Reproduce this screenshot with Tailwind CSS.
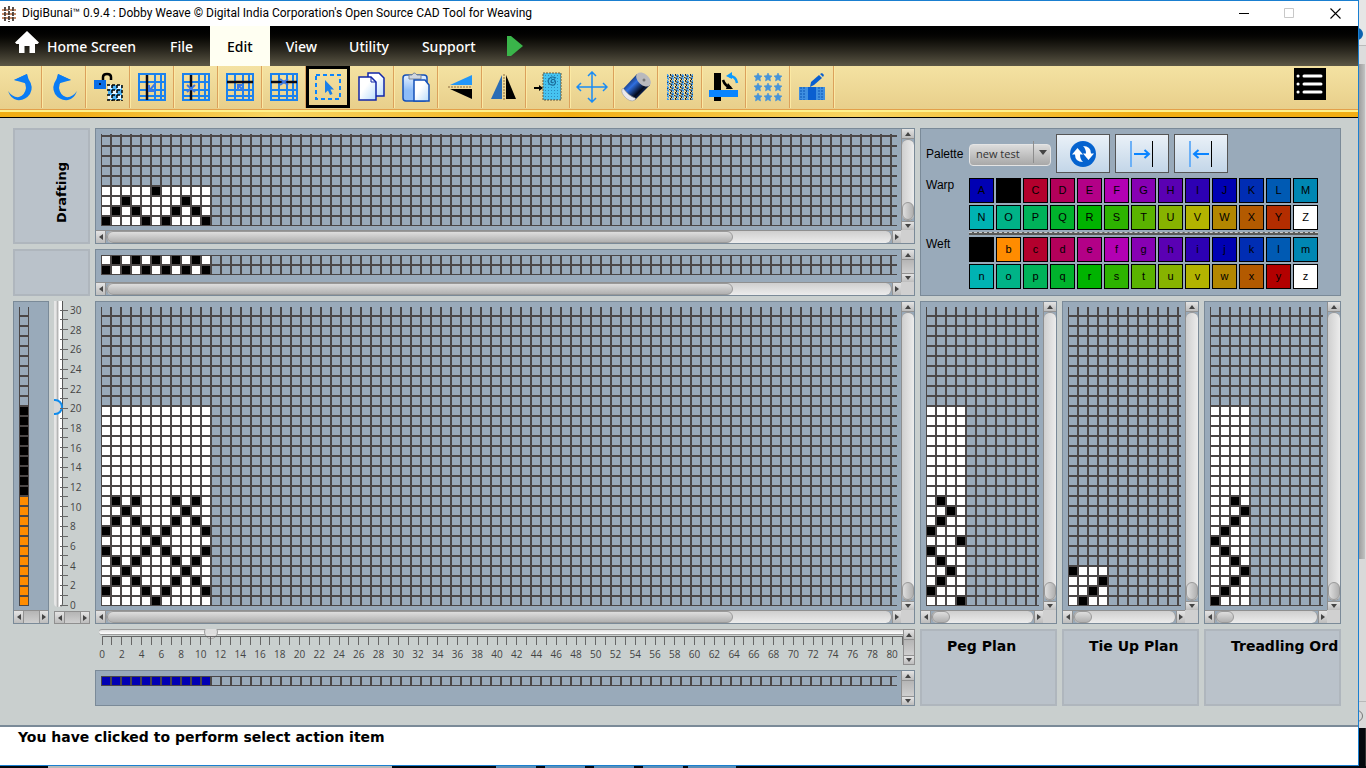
<!DOCTYPE html>
<html lang="en">
<head>
  <meta charset="UTF-8" />
  <meta name="viewport" content="width=device-width, initial-scale=1.0"/>
  <title>DigiBunai - Dobby Weave</title>
  <script src="https://cdn.jsdelivr.net/npm/@tailwindcss/browser@4"></script>
</head>
<body class="h-screen flex flex-col overflow-hidden bg-[#05080d] font-['Open_Sans',sans-serif]">

  <!-- Shared shapes -->
  <svg width="0" height="0" class="absolute" aria-hidden="true">
    <defs>
      <pattern id="weave" width="5" height="6" patternUnits="userSpaceOnUse">
        <path d="M0 0L3 2L1 4L4 6" fill="none" stroke="#0b1a2e" stroke-width="1"/>
        <path d="M2.500 0L5 2.500M3 3.500L5.500 6" fill="none" stroke="#1e90ff" stroke-width="1.4"/>
      </pattern>
      <pattern id="dots" width="3" height="3" patternUnits="userSpaceOnUse">
        <rect width="3" height="3" fill="#46c3f0"/><rect x="1" y="1" width="1" height="1" fill="#2b8cc0"/>
      </pattern>
      <linearGradient id="page" x1="0" y1="0" x2="1" y2="1"><stop offset=".4" stop-color="#fff"/><stop offset="1" stop-color="#b9dcfb"/></linearGradient>
      <linearGradient id="board" x1="0" y1="0" x2="0" y2="1"><stop offset="0" stop-color="#e8f3ff"/><stop offset=".6" stop-color="#8dbcf8"/></linearGradient>
      <linearGradient id="thread" x1=".1" y1=".2" x2=".8" y2=".9"><stop offset="0" stop-color="#08183c"/><stop offset=".35" stop-color="#2f6fe0"/><stop offset=".7" stop-color="#030a1c"/><stop offset="1" stop-color="#1c4aa0"/></linearGradient>
      <path id="star" d="M4 0L5.2 2.6L8 3L6 5L6.5 8L4 6.6L1.5 8L2 5L0 3L2.8 2.6Z"/>
    </defs>
  </svg>

  <div class="flex-1 min-h-0 flex">
    <div class="flex-1 min-w-0 flex flex-col border-t border-r border-b border-[#1a7fd0] bg-[#c9cfce]">

      <!-- Title bar -->
      <div class="h-[25px] shrink-0 flex items-center bg-white text-black">
        <svg class="w-4 h-4 ml-px mr-[5px]" viewBox="0 0 16 16" fill="none" stroke-width="1.7">
          <path d="M1 4H15M1 8H15M1 12H15" stroke="#b5683c" stroke-dasharray="3 1"/>
          <path d="M4 1V15M8 0V16M12 1V15" stroke="#3c3029" stroke-dasharray="4 1"/>
        </svg>
        <h1 class="text-[12px] leading-6 pb-px whitespace-nowrap font-['Roboto',sans-serif]">DigiBunai™ 0.9.4 : Dobby Weave © Digital India Corporation's Open Source CAD Tool for Weaving</h1>
        <div class="ml-auto flex">
          <button aria-label="Minimize" class="w-[45px] h-6 grid place-items-center"><svg class="w-[11px] h-[11px]" viewBox="0 0 11 11"><path d="M0 5.5H10" stroke="#000"/></svg></button>
          <button aria-label="Maximize" class="w-[45px] h-6 grid place-items-center" disabled><svg class="w-[11px] h-[11px]" viewBox="0 0 11 11"><path d="M.5 .5H9.5V9.5H.5Z" stroke="#c8c8c8" fill="none"/></svg></button>
          <button aria-label="Close" class="w-[46px] h-6 grid place-items-center"><svg class="w-[11px] h-[11px]" viewBox="0 0 11 11"><path d="M.5 .5L10.5 10.5M10.5 .5L.5 10.5" stroke="#000" stroke-width="1.1"/></svg></button>
        </div>
      </div>

      <!-- Menu bar -->
      <nav class="h-10 shrink-0 flex bg-linear-to-b from-black to-[#5c5746] text-white text-[14px] font-medium font-['Noto_Sans',sans-serif]">
        <button class="flex items-center pl-[15px] pr-[17px] whitespace-nowrap">
          <svg class="w-6 h-6 mr-2 -mt-2" viewBox="0 0 24 24" fill="#fff"><path d="M12 1L24 12.5L22.5 14H20V23H14.5V16H9.500V23H4V14H1.500L0 12.500Z"/></svg>Home Screen
        </button>
        <button class="px-[17px]">File</button>
        <button class="px-[17px] bg-[#fffff2] text-black">Edit</button>
        <button class="px-4">View</button>
        <button class="px-4">Utility</button>
        <button class="px-[17px]">Support</button>
        <button aria-label="Run" class="px-[14px]"><svg class="w-4 h-5" viewBox="0 0 16 20"><path d="M0 0H4L16 10L4 20H0Z" fill="#3ab54a"/></svg></button>
      </nav>

      <!-- Toolbar -->
      <div class="h-11 shrink-0 flex bg-linear-to-b from-[#f4e2a2] to-[#e8cf8b] border-b border-[#e3a04a]">
        <div id="tools" class="flex h-[42px]"></div>
        <button aria-label="Menu" class="ml-auto mr-8 mt-[2px] w-8 h-8 bg-black">
          <svg viewBox="0 0 32 32" stroke="#fff" stroke-width="3" stroke-linecap="round"><path d="M4 8H4.100M10 8H27M4 16H4.100M10 16H27M4 24H4.100M10 24H27"/></svg>
        </button>
      </div>
      <div class="h-2 shrink-0 border-t-2 border-b border-t-[#fdf08c] border-b-black bg-[linear-gradient(90deg,#f2ae13_0%,#f2b01a_6%,#f8d562_20%,#f2ae13_42%,#f8d562_63%,#f2ae13_84%,#f2ae13_100%)]"></div>

      <!-- Workspace -->
      <main class="flex-1 min-h-0 grid grid-cols-[77px_minmax(0,1fr)_421px] grid-rows-[116px_47px_minmax(0,1fr)_36px_36px] gap-[5px] pt-[10px] pl-[13px] pr-[17px] pb-[19px]">

        <div class="border-2 border-[#afb6bd] bg-[#bac2ca] grid place-items-center pl-5 pt-3">
          <h2 class="[writing-mode:vertical-rl] rotate-180 text-[13px] leading-4 font-bold font-['DejaVu_Sans',sans-serif]">Drafting</h2>
        </div>

        <section class="border border-[#7a8a98] bg-[#99aaba] flex" aria-label="Drafting grid">
          <div class="flex-1 min-w-0 flex flex-col">
            <svg data-grid="drafting" class="flex-1 min-h-0 mt-[5px] ml-[5px] mr-1 mb-1"></svg>
            <div data-hbar="626px"></div>
          </div>
          <div class="w-[13px] flex flex-col"><div data-vbar="18px" class="flex-1"></div><div class="h-[13px] bg-[#d0d0d0]"></div></div>
        </section>

        <section class="row-span-2 border border-[#7a8a98] bg-[#99aaba] pl-[5px] pt-[5px] font-['Liberation_Sans',sans-serif]">
          <div class="flex items-center gap-[5px]">
            <label for="palette" class="w-[38px] text-[12px]">Palette</label>
            <div class="relative">
              <select id="palette" class="appearance-none w-[82px] h-[22px] pl-[6px] text-[11px] text-[#333] rounded border border-[#e4e4e4] bg-linear-to-b from-[#dcdcdc] to-[#a8a8a8] font-['Open_Sans',sans-serif]"><option>new test</option></select>
              <span class="absolute right-0 top-0 h-[22px] w-[18px] border-l border-[#8d8d8d] grid place-items-center pointer-events-none"><svg class="w-2 h-[5px]" viewBox="0 0 8 5"><path d="M0 0H8L4 5Z" fill="#444"/></svg></span>
            </div>
            <button aria-label="Swap" class="w-[54px] h-[39px] grid place-items-center border border-[#555] bg-linear-to-b from-[#eaf1f8] to-[#c3d6e8]">
              <svg class="w-7 h-7" viewBox="0 0 28 28"><circle cx="14" cy="14" r="13" fill="#0563cf"/><path d="M8.500 8L14 14.500H11Q11 19 14 22Q6 22 6 14.500H3ZM19.500 20L14 13.500H17Q17 9 14 6Q22 6 22 13.500H25Z" fill="#fff"/></svg>
            </button>
            <button aria-label="Warp to weft" class="w-[54px] h-[39px] grid place-items-center border border-[#555] bg-linear-to-b from-[#eaf1f8] to-[#c3d6e8]">
              <svg class="w-7 h-7" viewBox="0 0 28 28" fill="none"><path d="M3 1V27" stroke="#6cb0f6" stroke-width="2"/><path d="M24.500 1V27" stroke="#000"/><path d="M6 14H20M16.500 10L21 14L16.500 18" stroke="#0a84ff" stroke-width="2"/></svg>
            </button>
            <button aria-label="Weft to warp" class="w-[54px] h-[39px] grid place-items-center border border-[#555] bg-linear-to-b from-[#eaf1f8] to-[#c3d6e8]">
              <svg class="w-7 h-7" viewBox="0 0 28 28" fill="none"><path d="M3 1V27" stroke="#6cb0f6" stroke-width="2"/><path d="M24.500 1V27" stroke="#000"/><path d="M22 14H8M11.500 10L7 14L11.500 18" stroke="#0a84ff" stroke-width="2"/></svg>
            </button>
          </div>
          <div class="flex gap-[5px] mt-[5px] text-[12px]">
            <span class="w-[38px] leading-[14px]">Warp</span>
            <div data-swatches="warp" class="grid grid-cols-13 gap-[2px]"></div>
          </div>
          <div class="ml-[43px] w-[349px] h-[3px] mt-[2px] mb-[2px] bg-[#5a5a58] border-t border-dashed border-[#c9c9c9]"></div>
          <div class="flex gap-[5px] text-[12px]">
            <span class="w-[38px] leading-[14px]">Weft</span>
            <div data-swatches="weft" class="grid grid-cols-13 gap-[2px]"></div>
          </div>
        </section>

        <div class="border-2 border-[#afb6bd] bg-[#bac2ca]"></div>

        <section class="border border-[#7a8a98] bg-[#99aaba] flex" aria-label="Denting">
          <div class="flex-1 min-w-0 flex flex-col">
            <svg data-grid="denting" class="h-5 mt-[5px] ml-[5px] mr-1 mb-auto"></svg>
            <div data-hbar="626px"></div>
          </div>
          <div class="w-[13px] flex flex-col"><div data-vbar="" class="flex-1"></div><div class="h-[13px] bg-[#d0d0d0]"></div></div>
        </section>

        <div class="grid grid-cols-2 gap-[5px]">
          <section class="border border-[#7a8a98] bg-[#99aaba] flex flex-col" aria-label="Weft colours">
            <svg data-grid="weftColors" class="flex-1 min-h-0 w-[10px] mt-[5px] ml-[5px] mb-1"></svg>
            <div data-hbar=""></div>
          </section>
          <div class="flex flex-col min-h-0">
            <div class="flex-1 min-h-0 flex overflow-hidden">
              <div class="grid w-[6px] shrink-0">
                <div class="[grid-area:1/1] mb-[4px] border-r border-[#555] rounded-b bg-linear-to-r from-[#e6e6e6] from-25% via-[#a5a5a5] via-50% to-white to-60%"></div>
                <input type="range" aria-label="Weft count" min="0" max="30" value="20" class="[grid-area:1/1] [writing-mode:vertical-lr] [direction:rtl] appearance-none bg-transparent w-4 h-full -ml-[7px] [&::-webkit-slider-thumb]:appearance-none [&::-webkit-slider-thumb]:w-4 [&::-webkit-slider-thumb]:h-4 [&::-webkit-slider-thumb]:rounded-full [&::-webkit-slider-thumb]:border-2 [&::-webkit-slider-thumb]:border-[#0e8cee] [&::-webkit-slider-thumb]:bg-[#d6d6d6]"/>
              </div>
              <svg data-axis="y" class="flex-1 min-w-0 mt-[9px] mb-[6px] overflow-visible text-[10px]"></svg>
            </div>
            <div data-hbar="" class="border border-[#8f8f8f]"></div>
          </div>
        </div>

        <section class="border border-[#7a8a98] bg-[#99aaba] flex" aria-label="Weave design">
          <div class="flex-1 min-w-0 flex flex-col">
            <svg data-grid="design" class="flex-1 min-h-0 mt-[5px] ml-[5px] mr-1 mb-1"></svg>
            <div data-hbar="626px"></div>
          </div>
          <div class="w-[13px] flex flex-col"><div data-vbar="18px" class="flex-1"></div><div class="h-[13px] bg-[#d0d0d0]"></div></div>
        </section>

        <div class="grid grid-cols-3 gap-[5px]">
          <section class="border border-[#7a8a98] bg-[#99aaba] flex" aria-label="Peg plan grid">
            <div class="flex-1 min-w-0 flex flex-col">
              <svg data-grid="peg" class="flex-1 min-h-0 mt-[5px] ml-[5px] mr-1 mb-1"></svg>
              <div data-hbar="18px"></div>
            </div>
            <div class="w-[13px] flex flex-col"><div data-vbar="18px" class="flex-1"></div><div class="h-[13px] bg-[#d0d0d0]"></div></div>
          </section>
          <section class="border border-[#7a8a98] bg-[#99aaba] flex" aria-label="Tie up grid">
            <div class="flex-1 min-w-0 flex flex-col">
              <svg data-grid="tieup" class="flex-1 min-h-0 mt-[5px] ml-[5px] mr-1 mb-1"></svg>
              <div data-hbar="18px"></div>
            </div>
            <div class="w-[13px] flex flex-col"><div data-vbar="18px" class="flex-1"></div><div class="h-[13px] bg-[#d0d0d0]"></div></div>
          </section>
          <section class="border border-[#7a8a98] bg-[#99aaba] flex" aria-label="Treadling grid">
            <div class="flex-1 min-w-0 flex flex-col">
              <svg data-grid="treadling" class="flex-1 min-h-0 mt-[5px] ml-[5px] mr-1 mb-1"></svg>
              <div data-hbar="18px"></div>
            </div>
            <div class="w-[13px] flex flex-col"><div data-vbar="18px" class="flex-1"></div><div class="h-[13px] bg-[#d0d0d0]"></div></div>
          </section>
        </div>

        <div class="col-start-2 flex">
          <div class="flex-1 min-w-0 overflow-hidden">
            <div class="grid h-[7px] items-start">
              <div class="[grid-area:1/1] ml-1 h-[6px] rounded-l-full border-y border-[#9a9a9a] bg-linear-to-b from-[#e0e0e0] to-white"></div>
              <input type="range" aria-label="Warp count" min="0" max="81" value="11" class="[grid-area:1/1] appearance-none bg-transparent h-[14px] w-[calc(100%+6px)] -mt-1 [&::-webkit-slider-thumb]:appearance-none [&::-webkit-slider-thumb]:w-[14px] [&::-webkit-slider-thumb]:h-[14px] [&::-webkit-slider-thumb]:rounded-full [&::-webkit-slider-thumb]:border [&::-webkit-slider-thumb]:border-[#9c9c9c] [&::-webkit-slider-thumb]:bg-[#dedede]"/>
            </div>
            <div class="pl-[7px] pr-px"><svg data-axis="x" class="w-full h-7 overflow-visible text-[10px]"></svg></div>
          </div>
          <div data-vbar="" class="w-3 border border-[#8f8f8f]"></div>
        </div>

        <div class="row-span-2 grid grid-cols-3 gap-[5px] text-[14px] leading-5 font-bold font-['DejaVu_Sans',sans-serif] whitespace-nowrap">
          <div class="border-2 border-[#afb6bd] bg-[#bac2ca] pl-[25px] pt-[5px] overflow-hidden"><h2>Peg Plan</h2></div>
          <div class="border-2 border-[#afb6bd] bg-[#bac2ca] pl-[25px] pt-[5px] overflow-hidden"><h2>Tie Up Plan</h2></div>
          <div class="border-2 border-[#afb6bd] bg-[#bac2ca] pl-[25px] pt-[5px] overflow-hidden"><h2>Treadling Ord</h2></div>
        </div>

        <section class="col-start-2 border border-[#7a8a98] bg-[#99aaba] flex" aria-label="Warp colours">
          <svg data-grid="warpColors" class="flex-1 min-w-0 h-[10px] mt-[5px] ml-[5px] mr-1"></svg>
          <div data-vbar="" class="w-[13px]"></div>
        </section>
      </main>

      <footer class="h-10 shrink-0 border-t-2 border-[#7a8a98] bg-white pl-[18px] text-[14px] leading-5 font-bold font-['DejaVu_Sans',sans-serif]">You have clicked to perform select action item</footer>
    </div>

    <!-- Window behind -->
    <div class="w-[7px] shrink-0 flex flex-col overflow-hidden bg-[#d9d9d9]">
      <div class="h-[46px] pt-7 bg-[#e6e6e6] border-b border-[#bbb]"><div class="w-3 h-3 -ml-2 rounded-full bg-[#0b63b0]"></div></div>
      <div class="h-[18px] bg-[#dcdcdc]"></div>
      <div class="h-[495px] bg-linear-to-r from-[#9e9e9e] to-[#c2c2c2] border-r border-[#ddd]"></div>
      <div class="h-[143px] border-b border-[#b8b8b8]"></div>
      <div class="h-[26px] pt-2"><div class="w-3 h-3 -ml-2 rounded-full border border-[#777]"></div></div>
      <div class="flex-1 bg-[#05080d] border-r border-[#333]"></div>
    </div>
  </div>

  <!-- Taskbar edge -->
  <div class="h-[2px] shrink-0 flex">
    <div class="w-12"></div><div class="w-[344px] bg-[#b9b9b9]"></div>
    <div class="ml-[104px] flex gap-[9px]">
      <div class="w-10 bg-[#5c8fb8]"></div><div class="w-10 bg-[#5c8fb8]"></div><div class="w-10 bg-[#5c8fb8]"></div><div class="w-10 bg-[#5c8fb8]"></div>
    </div>
    <div class="ml-[5px] w-12 bg-[#5c8fb8]"></div>
  </div>

  <script>
    const fills = { '.': '#fff', '#': '#000', o: '#ff8c00', b: '#0000b3' };
    const blank = (n, width) => Array(n).fill('.'.repeat(width));

    // rows run from the bottom up
    const grids = {
      drafting: ['#...#.#...#', '.#.#...#.#.', '..#.....#..', '.....#.....'],
      denting: ['#.#.#.#.#.#', '.#.#.#.#.#.'],
      design: ['.....#.....', '#...#.#...#', '.#.#...#.#.', '..#.....#..', '.#.#...#.#.', '#...#.#...#',
        '.....#.....', '#...#.#...#', '.#.#...#.#.', '..#.....#..', '.#.#...#.#.', ...blank(9, 11)],
      weftColors: [...'ooooooooooo#########'],
      warpColors: ['bbbbbbbbbbb'],
      peg: ['...#', '#...', '.#..', '..#.', '.#..', '#...', '...#', '#...', '.#..', '..#.', '.#..', ...blank(9, 4)],
      tieup: ['.#..', '..#.', '...#', '#...'],
      treadling: ['#...', '.#..', '..#.', '...#', '..#.', '.#..', '#...', '.#..', '..#.', '...#', '..#.', ...blank(9, 4)]
    };

    let mesh = '';
    for (let i = 0; i <= 300; i++) mesh += `M${i * 10} -1200V0`;
    for (let i = 0; i <= 120; i++) mesh += `M0 ${-i * 10}H3000`;

    document.querySelectorAll('[data-grid]').forEach(svg => {
      const cells = grids[svg.dataset.grid].map((row, r) => [...row].map((c, i) =>
        `<rect x="${i * 10}" y="${-(r + 1) * 10}" width="10" height="10" fill="${fills[c]}"/>`).join('')).join('');
      svg.innerHTML = `<svg y="100%" overflow="visible" shape-rendering="crispEdges">${cells}<path d="${mesh}" stroke="#4b4747" stroke-width="2"/></svg>`;
    });

    document.querySelectorAll('[data-axis]').forEach(svg => {
      const isX = svg.dataset.axis === 'x';
      const max = isX ? 81 : 30;
      let out = isX
        ? '<line x1="0" x2="110%" y1="0.5" y2="0.5" stroke="#666"/>'
        : '';
      for (let i = 0; i <= max; i++) {
        const p = (isX ? i : max - i) / max * 100 + '%';
        out += isX ? `<line x1="${p}" x2="${p}" y1="0" y2="9" stroke="#666" shape-rendering="crispEdges"/>`
                   : `<line x1="0" x2="8" y1="${p}" y2="${p}" stroke="#666" shape-rendering="crispEdges"/>`;
        if (i % 2 === 0) {
          out += isX ? `<text x="${p}" y="22" text-anchor="middle" fill="#444">${i}</text>`
                     : `<text x="10" y="${p}" dy="4" fill="#444">${i}</text>`;
        }
      }
      svg.innerHTML = out;
    });

    const arrow = (label, d, cls) =>
      `<button aria-label="${label}" class="${cls} shrink-0 grid place-items-center bg-linear-to-b from-[#e4e4e4] to-[#bdbdbd] border-[#929292]"><svg class="w-[6px] h-[6px]" viewBox="0 0 6 6"><path d="${d}" fill="#444"/></svg></button>`;

    document.querySelectorAll('[data-hbar]').forEach(el => {
      const size = el.dataset.hbar;
      el.classList.add('flex', 'shrink-0', 'h-[13px]', 'border-t', 'border-[#8f8f8f]');
      el.innerHTML = arrow('Scroll left', 'M5 0V6L1 3Z', 'w-[10px] border-r') +
        (size ? `<div class="flex-1 rounded-full bg-linear-to-b from-[#cfcfcf] to-[#ececec] border-x border-[#999]"><div class="h-full rounded-full border border-[#999] bg-linear-to-b from-[#dedede] to-[#b0b0b0]" style="width:${size}"></div></div>`
              : '<div class="flex-1 bg-linear-to-b from-[#b5b5b5] to-[#cfcfcf]"></div>') +
        arrow('Scroll right', 'M1 0V6L5 3Z', 'w-[9px] border-l');
    });

    document.querySelectorAll('[data-vbar]').forEach(el => {
      const size = el.dataset.vbar;
      el.classList.add('flex', 'flex-col', 'border-l', 'border-[#8f8f8f]');
      el.innerHTML = arrow('Scroll up', 'M0 5H6L3 1Z', 'h-[10px] border-b') +
        (size ? `<div class="flex-1 flex items-end rounded-full bg-linear-to-r from-[#cfcfcf] to-[#ececec] border-y border-[#999]"><div class="w-full rounded-full border border-[#999] bg-linear-to-r from-[#dedede] to-[#b0b0b0]" style="height:${size}"></div></div>`
              : '<div class="flex-1 bg-linear-to-b from-[#b5b5b5] to-[#cfcfcf]"></div>') +
        arrow('Scroll down', 'M0 1H6L3 5Z', 'h-[9px] border-t');
    });

    const wheel = ['#b3002d', '#b3005a', '#b30087', '#b300b3', '#8700b3', '#5a00b3', '#2d00b3', '#0000b3', '#002db3', '#005ab3', '#0087b3',
      '#00b3b3', '#00b387', '#00b35a', '#00b32d', '#00b300', '#2db300', '#5ab300', '#87b300', '#b3b300', '#b38700', '#b35a00'];
    const palettes = {
      warp: { letters: 'ABCDEFGHIJKLMNOPQRSTUVWXYZ', colors: ['#0000b3', '#000000', ...wheel, '#b32d00', '#ffffff'] },
      weft: { letters: 'abcdefghijklmnopqrstuvwxyz', colors: ['#000000', '#ff8c00', ...wheel, '#b30000', '#ffffff'] }
    };
    document.querySelectorAll('[data-swatches]').forEach(el => {
      const { letters, colors } = palettes[el.dataset.swatches];
      el.innerHTML = colors.map((c, i) =>
        `<button class="w-[25px] h-[25px] border border-black text-[11px] leading-none text-black" style="background:${c}">${letters[i]}</button>`).join('');
    });

    const lattice = (mark, arrowPath) =>
      `<path d="M3 3H29V29H3ZM3 11H29M3 19H29M3 25H29M11 3V29M19 3V29M25 3V29" stroke="#1b82ee" stroke-width="2"/><path d="${mark}" stroke="#0a0a14" stroke-width="2.500"/><path d="${arrowPath}" stroke="#3b78e4" stroke-width="2"/>`;
    const stars = [0, 10, 20].map(y => [0, 10, 20].map(x => `<use href="#star" x="${x + 2}" y="${y + 2}"/>`).join('')).join('');

    const tools = [
      ['Undo', '<path d="M9 9L22 3L23.500 8Q29 16 25 23Q20 30 12 29Q6 28 3 20Q8 27 14 26Q20 24 21 17Q21 13 19 10.500Z" fill="#0a7cf5"/><path d="M9 9L22 3L23 13Z" fill="#0a7cf5"/>'],
      ['Redo', '<path d="M23 9L10 3L8.500 8Q3 16 7 23Q12 30 20 29Q26 28 29 20Q24 27 18 26Q12 24 11 17Q11 13 13 10.500Z" fill="#0a7cf5"/><path d="M23 9L10 3L9 13Z" fill="#0a7cf5"/>'],
      ['Unlock', '<path d="M11 9V6Q11 3 15 3Q19 3 19 6V9" stroke="#000" stroke-width="2.500"/><path d="M2 9H14V18H2Z" fill="#0a6ee8"/><path d="M16 14H30V29H16Z" fill="#4ab0f5"/><path d="M16 14H20V18H16ZM25 14H29V18H25ZM20 19H25V23H20ZM16 24H20V28H16ZM25 24H29V28H25Z" fill="#e8f6ff"/><path d="M15 14H30M15 19H30M15 24H30M15 29H30M20 14V30M25 14V30M30 14V30" stroke="#000" stroke-width="1.500" stroke-dasharray="3 2"/><path d="M7 13H9" stroke="#013" stroke-width="2"/>'],
      ['Insert warp', lattice('M11 4V29', 'M19 13L13 20M13 14V20H19')],
      ['Delete warp', lattice('M11 4V29', 'M7 14L15 21M15 14L7 21')],
      ['Insert weft', lattice('M3 11H29', 'M20 20L14 14M14 19V14H19')],
      ['Delete weft', lattice('M3 11H29', 'M12 8L20 14M20 8L12 14')],
      ['Select', '<path d="M4 4H28V28H4Z" stroke="#0a84ff" stroke-width="2" stroke-dasharray="4 3"/><path d="M13 9V22L16 19.500L18 24L20.500 23L18.500 18.500H22Z" fill="#1a7fe8"/>'],
      ['Copy', '<path d="M12 2H23L28 7V25H12Z" fill="url(#page)" stroke="#1226a8" stroke-width="1.500"/><path d="M3 6H15L20 11V29H3Z" fill="url(#page)" stroke="#1226a8" stroke-width="1.500"/><path d="M15 6V11H20" stroke="#1226a8"/>'],
      ['Paste', '<rect x="3" y="4" width="24" height="26" rx="3" fill="url(#board)" stroke="#1450b8" stroke-width="1.500"/><path d="M9 8V4H12Q14 0 17 4H21V8Z" fill="#cfd6e0" stroke="#7d8794"/><path d="M14 9H25L29 14V30H14Z" fill="url(#page)" stroke="#1450b8" stroke-width="1.500"/>'],
      ['Mirror vertical', '<path d="M28 4V14H6Z" fill="#2196f8"/><path d="M28 28V18H6Z" fill="#000"/><path d="M4 16H28" stroke="#8a6a40" stroke-dasharray="2 1"/>'],
      ['Mirror horizontal', '<path d="M14 4V28H3Z" fill="#2a6db5"/><path d="M18 4V28H28Z" fill="#000"/><path d="M16 3V29" stroke="#8a6a40" stroke-dasharray="2 1"/>'],
      ['Clear', '<rect x="11" y="2" width="18" height="27" fill="url(#dots)" stroke="#6b5a3a" stroke-dasharray="2 1"/><path d="M24 7Q18 4 16 10Q17 15 22 14Q25 11 22 8.500Q19 8 19 11Q20 12.500 21.500 11" stroke="#1a6a98" stroke-width="1.200"/><path d="M2 17H8" stroke="#000" stroke-width="2"/><path d="M7 14L11 17L7 20Z" fill="#000"/>'],
      ['Move', '<path d="M16 1V31M1 16H31M12 5L16 1L20 5M12 27L16 31L20 27M5 12L1 16L5 20M27 12L31 16L27 20" stroke="#1a8cf5" stroke-width="1.500"/>'],
      ['Yarn', '<path d="M3 18L17 3L30 14L15 29Z" fill="url(#thread)"/><ellipse cx="23.500" cy="8.500" rx="8.500" ry="5.500" transform="rotate(42 23.500 8.500)" fill="#b9b9bd"/><circle cx="24" cy="9" r="1.500" fill="#777"/><path d="M3 17Q0 20 4 25Q10 32 15 29Q16 27 15 27Q8 25 3 17Z" fill="#e8e8ee" stroke="#999" stroke-width=".6"/>'],
      ['Fabric', '<rect x="3" y="3" width="26" height="26" fill="url(#weave)"/>'],
      ['Switch face', '<path d="M6 2H13V30H6Z" fill="#000"/><path d="M1 19H30V26H1Z" fill="#0a84ff"/><path d="M15 9Q17 15 23 17" stroke="#000" stroke-width="2.500"/><path d="M20 12L25 18L18 18Z" fill="#000"/><path d="M21 5Q28 5 29 12" stroke="#0a9aff" stroke-width="2.500"/><path d="M24 1L18 5L24 8Z" fill="#0a9aff"/>'],
      ['Repeat', `<g fill="#4694d8" stroke="#4694d8" stroke-width=".6">${stars}</g>`],
      ['Edit thread', '<path d="M3 16H29V29H3Z" fill="#3f8fe0"/><path d="M5 16V29M8 16V29M23 16V29M26 16V29" stroke="#0a55b5" stroke-dasharray="2 1"/><path d="M12 16H20V29H12Z" fill="#0a5fd0"/><path d="M14 16L15 11L23 4L26 7L18 14Z" fill="#0a5fd0"/><path d="M24 3L26 2L28 4L27 6Z" fill="#0a5fd0"/>']
    ];
    document.getElementById('tools').innerHTML = tools.map(([label, art], i) =>
      `<button aria-label="${label}" class="${i === 0 ? 'w-[42px]' : 'w-11'} ${label === 'Select' ? 'border-3 border-black' : 'border-r border-[#dba15c] shadow-[1px_0_0_#fbe9a4]'} grid place-items-center"><svg class="w-8 h-8" viewBox="0 0 32 32" fill="none">${art}</svg></button>`).join('');
  </script>
</body>
</html>
